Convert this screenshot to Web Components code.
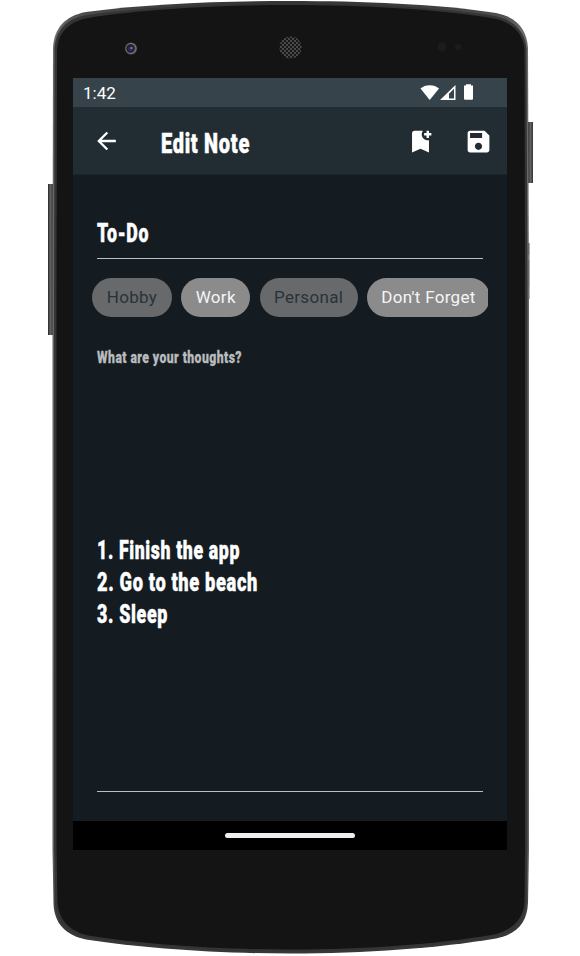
<!DOCTYPE html>
<html lang="en">
<head>
<meta charset="utf-8">
<title>Edit Note</title>
<style>
html,body{margin:0;background:#fff}
body{width:580px;height:956px;overflow:hidden;font-family:Roboto,"Liberation Sans",sans-serif}
</style>
</head>
<body>
<phone-frame>
  <status-bar time="1:42"></status-bar>
  <app-bar heading="Edit Note"></app-bar>
  <note-editor>
    <title-field slot="title"><fit-text text="To-Do" size="25" width="52"></fit-text></title-field>
    <chip-row slot="chips">
      <tag-chip w="80">Hobby</tag-chip>
      <tag-chip w="69" selected>Work</tag-chip>
      <tag-chip w="98">Personal</tag-chip>
      <tag-chip w="123" selected>Don't Forget</tag-chip>
    </chip-row>
    <fit-text slot="label" text="What are your thoughts?" size="16.6" width="145" color="#b9bbbd"></fit-text>
    <note-body slot="body">
      <fit-text text="1. Finish the app" size="25" width="143"></fit-text>
      <fit-text text="2. Go to the beach" size="25" width="161"></fit-text>
      <fit-text text="3. Sleep" size="25" width="71"></fit-text>
    </note-body>
  </note-editor>
  <nav-bar></nav-bar>
</phone-frame>
<script>
function define(name, render) {
  customElements.define(name, class extends HTMLElement {
    constructor() { super(); this.attachShadow({ mode: 'open' }); }
    connectedCallback() { this.shadowRoot.innerHTML = render(this); }
  });
}

define('phone-frame', () => `
<style>
:host{display:block;position:relative;box-sizing:border-box;width:580px;height:956px;padding:78px 73px 106px}
svg{position:absolute;left:0;top:0}
main{position:relative;display:flex;flex-direction:column;width:434px;height:772px;background:#141b21}
</style>
<svg width="580" height="956" viewBox="0 0 580 956">
  <defs>
    <linearGradient id="key" x1="0" x2="1"><stop offset="0" stop-color="#242424"/><stop offset=".45" stop-color="#666"/><stop offset="1" stop-color="#333"/></linearGradient>
    <linearGradient id="rim" x1="0" x2="0" y1="0" y2="1"><stop offset="0" stop-color="#343434"/><stop offset=".03" stop-color="#6a6a6a"/><stop offset=".9" stop-color="#606060"/><stop offset=".97" stop-color="#383838"/></linearGradient>
    <pattern id="mesh" width="4" height="4" patternUnits="userSpaceOnUse"><rect width="4" height="4" fill="#4c4c4c"/><circle cx="1" cy="1" r="1.15" fill="#151515"/><circle cx="3" cy="3" r="1.15" fill="#151515"/></pattern>
    <radialGradient id="lens"><stop offset="0" stop-color="#333"/><stop offset=".6" stop-color="#555"/><stop offset=".8" stop-color="#777"/><stop offset="1" stop-color="#222"/></radialGradient>
  </defs>
  <path d="M48 184h5v151h-5z" fill="url(#key)"/>
  <path d="M528 122h5v61h-5z" fill="url(#key)"/>
  <path d="M528 243h1.500v56H528z" fill="#51555a"/><path d="M528 255h1.500v5H528zM528 287h1.500v12H528z" fill="#bbb"/>
  <path d="M52.500 300L53 48C54 28 65 16 86 12C145 4 220 1 290 1C360 1 440 4 496 13C517 17 527 30 528 48L529 300V850L528 903C527 923 517 934 496 938.500C440 948 365 953.500 290 953.500C215 953.500 140 948 86 939.500C65 935 54 923 53.500 903L52.500 850Z" fill="url(#rim)"/>
  <path d="M54 300L54.500 49C55.500 30 66 19 87 15C145 7 220 3 290 3C360 3 440 7 495 16C515 20 525.500 33 526.500 49L527.500 300V850L526.500 902C525.500 920 515 931.500 495 936C440 946 365 951.500 290 951.500C215 951.500 140 946 87 937C67 932.500 55.500 920 55 902L54 850Z" fill="#343434"/>
  <path d="M56.500 300L57 50C58 33 68 22 88 18C145 9 220 5 290 5C360 5 440 9 494 18.500C513 22 524 35 524.500 50L525 300V850L524.500 901C524 918 513 930 494 934.500C440 944 365 949.500 290 949.500C215 949.500 140 944 88 935.500C68 931 58 918 57.500 901L56.500 850Z" fill="#141414"/>
  <circle cx="131" cy="48.500" r="6.300" fill="url(#lens)"/>
  <circle cx="130.500" cy="48.500" r="4.200" fill="#202030"/><circle cx="130.500" cy="48.800" r="2.400" fill="#2c2c6c"/><circle cx="131.500" cy="48" r="1.100" fill="#8484bc"/>
  <circle cx="290.500" cy="47.500" r="11" fill="url(#mesh)"/>
  <circle cx="442" cy="47" r="4.500" fill="#1c1c1c"/><circle cx="458" cy="47" r="3" fill="#1c1c1c"/>
</svg>
<main><slot></slot></main>`);

/* Condensed heading text, stretched or squeezed to a set advance width. */
define('fit-text', el => {
  const s = +el.getAttribute('size'), w = el.getAttribute('width'), h = 32;
  const c = el.getAttribute('color') || '#fff';
  return `<style>:host{display:block;height:${h}px}svg{display:block;overflow:visible}
text{font:900 ${s}px Roboto,"Liberation Sans",sans-serif;letter-spacing:.035em;fill:${c};stroke:${c};stroke-width:${s / 60}px}</style>
<svg width="${w}" height="${h}"><text x="0" y="25" textLength="${w}" lengthAdjust="spacingAndGlyphs">${el.getAttribute('text')}</text></svg>`;
});

define('status-bar', el => `
<style>
:host{display:flex;justify-content:space-between;height:29px;background:#36434a;color:#fff}
span{font-size:17px;line-height:30px;padding-left:10px}
svg{display:block;margin-right:34px}
</style>
<span>${el.getAttribute('time')}</span>
<svg width="56" height="29" viewBox="417 78 56 29" fill="#fff">
  <path d="M420.500 88.500C425 84 434.500 84 439 88.500L429.700 100Z"/>
  <path fill-rule="evenodd" d="M440 100L455.500 85V100ZM449 98.600H454V88.800L449 93.800Z"/>
  <path d="M466 85.500V84.300H471V85.500H473V98.800a1 1 0 0 1-1 1H465a1 1 0 0 1-1-1V85.500Z"/>
</svg>`);

define('app-bar', el => `
<style>
:host{display:flex;border-bottom:1px solid #1b252c;background:#212c33;box-sizing:border-box;height:68px;padding:20px 14.500px 0 19px}
fit-text{margin:1px 0 0 39.500px;flex:1}
svg{display:block;width:29px;height:28px;fill:#fff}
.end{width:29px;height:29px;margin-top:-.500px}
.add{margin-right:28.500px}
</style>
<svg viewBox="0 0 24 24"><path d="M20 11H7.830l5.590-5.590L12 4l-8 8 8 8 1.410-1.410L7.830 13H20v-2z"/></svg>
<fit-text text="${el.getAttribute('heading')}" size="27" width="89"></fit-text>
<svg class="end add" viewBox="0 0 24 24"><path d="M21 7h-2v2h-2V7h-2V5h2V3h2v2h2v2zm-2 14l-7-3-7 3V5c0-1.100.9-2 2-2h7c-.63.840-1 1.870-1 3 0 2.760 2.240 5 5 5 .34 0 .68-.030 1-.1V21z"/></svg>
<svg class="end" viewBox="0 0 24 24"><path d="M17 3H5c-1.110 0-2 .9-2 2v14c0 1.100.890 2 2 2h14c1.100 0 2-.9 2-2V7l-4-4zm-5 16c-1.660 0-3-1.340-3-3s1.340-3 3-3 3 1.340 3 3-1.340 3-3 3zm3-10H5V5h10v4z"/></svg>`);

define('note-editor', () => `
<style>
:host{display:flex;flex-direction:column;flex:1;box-sizing:border-box;padding:42px 24px 29px;min-height:0}
.label{margin-top:21px}
.body{flex:1;display:flex;flex-direction:column;border-bottom:1px solid #b8bfc5;box-sizing:border-box}
</style>
<slot name="title"></slot>
<slot name="chips"></slot>
<div class="label"><slot name="label"></slot></div>
<div class="body"><slot name="body"></slot></div>`);

define('title-field', () => `
<style>:host{display:block;height:41px;border-bottom:1px solid #b8bfc5}</style><slot></slot>`);

define('note-body', () => `
<style>:host{display:block;padding-top:164px}</style><slot></slot>`);

define('chip-row', () => `
<style>:host{display:flex;gap:9.300px;height:39px;margin:19px -5px 0;overflow:hidden}</style><slot></slot>`);

define('tag-chip', el => `
<style>
:host{display:block;flex:none;box-sizing:border-box;width:${el.getAttribute('w')}px;height:39px;border-radius:20px;background:#67696b;color:#27333a;font-size:17px;line-height:39px;letter-spacing:.3px;text-align:center;white-space:nowrap}
:host([selected]){background:#8b8b8b;color:#f5f5f5}
</style><slot></slot>`);

define('nav-bar', () => `
<style>
:host{display:flex;align-items:center;justify-content:center;height:29px;background:#000}
i{display:block;width:130px;height:5px;border-radius:3px;background:#eee}
</style><i></i>`);
</script>
</body>
</html>
